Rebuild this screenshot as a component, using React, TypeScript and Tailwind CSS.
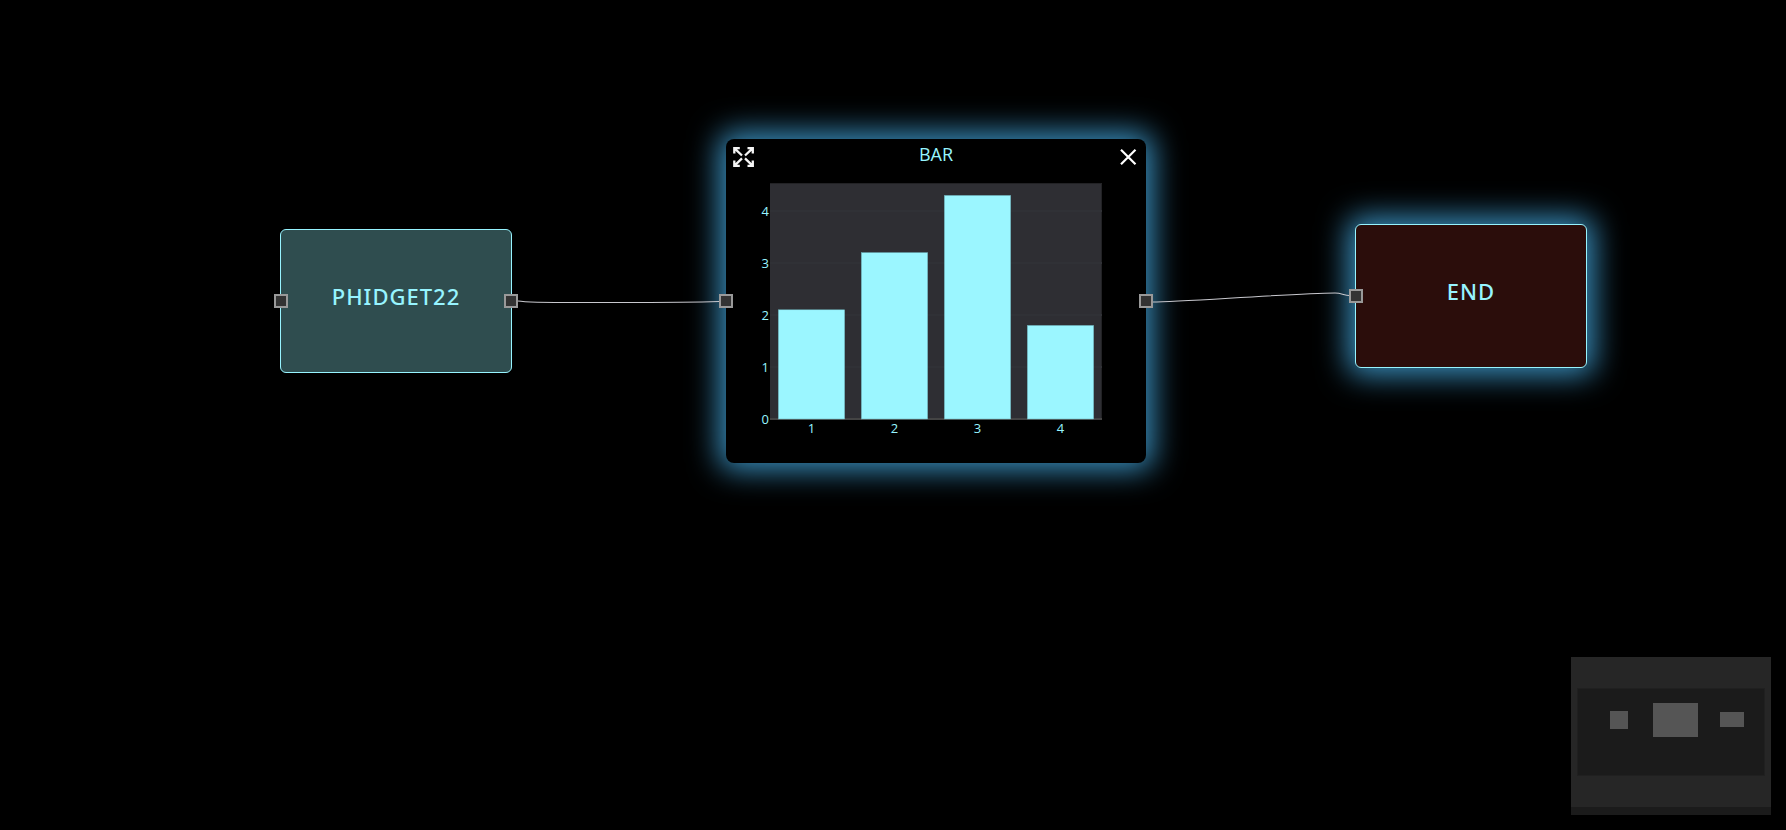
import type { ReactNode } from 'react';

const GLOW = 'shadow-[0_0_30px_7px_#3a90bf]';

function Handle({ side }: { side: 'left' | 'right' }) {
  const place = side === 'left' ? '-left-[7px]' : '-right-[7px]';
  return (
    <span
      className={`absolute top-1/2 size-3.5 -translate-y-1/2 border-2 border-[#999] bg-[#333] ${place}`}
    />
  );
}

function FlowNode({ className, children }: { className: string; children: ReactNode }) {
  return (
    <div
      className={`absolute flex h-36 w-[232px] items-center justify-center rounded-md border border-[#97f4ff] text-[22px] leading-8 font-medium tracking-[1px] text-[#97f4ff] ${className}`}
    >
      {children}
    </div>
  );
}

const BARS = [
  { label: '1', value: 2.1 },
  { label: '2', value: 3.2 },
  { label: '3', value: 4.3 },
  { label: '4', value: 1.8 },
];
const UNIT = 52;
const BASE = 236;

function BarChart() {
  return (
    <svg
      viewBox="0 0 420 284"
      className="block h-[284px] w-full"
      role="img"
      aria-label="Bar chart of values 2.1, 3.2, 4.3 and 1.8"
    >
      <g transform="translate(44 4)">
        <rect width="332" height={BASE} fill="#2e2e33" />
        <path d="M0 .5H331.500V236" fill="none" stroke="#222225" />
        {[1, 2, 3, 4].map((v) => (
          <path key={v} d={`M0 ${BASE - v * UNIT}H332`} stroke="#303136" strokeWidth="2" />
        ))}
        <path d={`M0 ${BASE}H332`} stroke="#444" strokeWidth="2" />
        {BARS.map((b, i) => (
          <rect
            key={b.label}
            x={8.3 + i * 83}
            y={BASE - b.value * UNIT}
            width="66.4"
            height={b.value * UNIT}
            fill="#9bf6ff"
            stroke="#6aabb3"
            strokeWidth="0.5"
          />
        ))}
        <g fill="#97f4ff" fontFamily="Open Sans" fontSize="13">
          {[0, 1, 2, 3, 4].map((v) => (
            <text key={v} x="-1" y={BASE - v * UNIT + 5} textAnchor="end">
              {v}
            </text>
          ))}
          {BARS.map((b, i) => (
            <text key={b.label} x={41.500 + i * 83} y={BASE + 14} textAnchor="middle">
              {b.label}
            </text>
          ))}
        </g>
      </g>
    </svg>
  );
}

function ChartPanel() {
  return (
    <section className={`absolute top-[139px] left-[726px] w-[420px] rounded-lg bg-black ${GLOW}`}>
      <header className="flex h-10 items-start justify-between px-1.5 pt-1.5">
        <button type="button" aria-label="Expand" className="text-[#f5f5f5]">
          <svg
            width="24"
            height="24"
            viewBox="0 0 24 24"
            fill="none"
            stroke="currentColor"
            strokeWidth="2.3"
          >
            <path d="M2.300 8.500V3.200H7.800M2.800 3.600L10 10.500M15.500 3.200H20.800V8.500M20.300 3.600L13 10.500M2.300 15.400V20.800H7.800M2.800 20.300L10 13.400M15.500 20.800H20.800V15.400M20.300 20.300L13 13.400" />
          </svg>
        </button>
        <h2 className="font-['Open_Sans',sans-serif] text-[18px] leading-[18px] text-[#97f4ff]">
          BAR
        </h2>
        <button type="button" aria-label="Close" className="text-white">
          <svg
            width="24"
            height="24"
            viewBox="0 0 24 24"
            fill="none"
            stroke="currentColor"
            strokeWidth="2.2"
          >
            <path d="M5 4.800L19.500 19.300M19.500 4.800L5 19.300" />
          </svg>
        </button>
      </header>
      <BarChart />
      <Handle side="left" />
      <Handle side="right" />
    </section>
  );
}

function Minimap() {
  return (
    <aside aria-label="Minimap" className="absolute right-[15px] bottom-[15px] w-[200px] bg-[#1b1b1b] pb-2">
      <svg viewBox="0 0 200 150" className="block w-full">
        <rect width="200" height="150" fill="#262626" />
        <rect x="6.500" y="31.500" width="187" height="87" fill="#1b1b1b" stroke="#202020" />
        <g fill="#555">
          <rect x="39" y="54" width="18" height="18" />
          <rect x="82" y="46" width="45" height="34" />
          <rect x="149" y="55" width="24" height="15" />
        </g>
      </svg>
    </aside>
  );
}

export default function App() {
  return (
    <main className="relative min-h-screen overflow-hidden bg-black font-['Noto_Sans',sans-serif]">
      <FlowNode className="top-[229px] left-[280px] bg-[#2f4d4f]">
        <span className="pb-2.5">PHIDGET22</span>
        <Handle side="left" />
        <Handle side="right" />
      </FlowNode>
      <ChartPanel />
      <FlowNode className={`top-[224px] left-[1355px] bg-[#2b0d0b] ${GLOW}`}>
        <span className="pb-2.5">END</span>
        <Handle side="left" />
      </FlowNode>
      <svg
        className="pointer-events-none absolute top-0 left-0 overflow-visible"
        width="1"
        height="1"
        fill="none"
        stroke="#c8c8ce"
        strokeWidth="1.1"
      >
        <path d="M518 301C530 303 550 302.500 615 302.500C680 302.500 705 302 719 301.500" />
        <path d="M1153 302C1180 302 1290 293.500 1335 293C1341 293 1345 295.500 1349 295.500" />
      </svg>
      <Minimap />
    </main>
  );
}
